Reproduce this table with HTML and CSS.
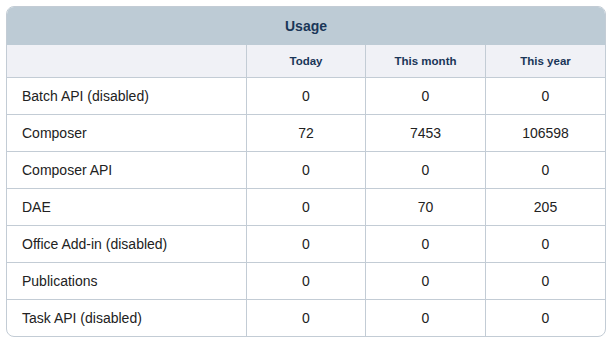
FILE: index.html
```html
<!DOCTYPE html>
<html lang="en">
<head>
<meta charset="utf-8">
<title>Usage</title>
<link rel="stylesheet" href="styles.css">
</head>
<body>
<div class="usage">
  <div class="title">Usage</div>
  <div class="grid">
    <div class="ch first"></div>
    <div class="ch">Today</div>
    <div class="ch">This month</div>
    <div class="ch">This year</div>

    <div class="c name">Batch API (disabled)</div><div class="c">0</div><div class="c">0</div><div class="c">0</div>
    <div class="c name">Composer</div><div class="c">72</div><div class="c">7453</div><div class="c">106598</div>
    <div class="c name">Composer API</div><div class="c">0</div><div class="c">0</div><div class="c">0</div>
    <div class="c name">DAE</div><div class="c">0</div><div class="c">70</div><div class="c">205</div>
    <div class="c name">Office Add-in (disabled)</div><div class="c">0</div><div class="c">0</div><div class="c">0</div>
    <div class="c name">Publications</div><div class="c">0</div><div class="c">0</div><div class="c">0</div>
    <div class="c name">Task API (disabled)</div><div class="c">0</div><div class="c">0</div><div class="c">0</div>
  </div>
</div>
</body>
</html>
```

FILE: styles.css
```css
html, body {
  margin: 0;
  background: #ffffff;
}
body {
  padding: 6px;
  font-family: "Liberation Sans", Arial, sans-serif;
  color: #222222;
}
.usage {
  width: 600px;
  box-sizing: border-box;
  border: 1px solid #c3ccd5;
  border-radius: 8px;
  overflow: hidden;
}
.title {
  height: 38px;
  line-height: 38px;
  background: #bdcbd5;
  color: #1a3658;
  font-weight: bold;
  font-size: 14px;
  text-align: center;
}
.grid {
  display: grid;
  grid-template-columns: 239px 119px 120px 120px;
}
.ch {
  height: 32px;
  line-height: 32px;
  background: #f0f1f6;
  color: #1a3658;
  font-weight: bold;
  font-size: 11.5px;
  text-align: center;
  border-left: 1px solid #c3ccd5;
  box-sizing: border-box;
}
.ch.first {
  border-left: none;
}
.c {
  height: 37px;
  line-height: 36px;
  box-sizing: border-box;
  border-top: 1px solid #c3ccd5;
  border-left: 1px solid #c3ccd5;
  font-size: 14px;
  text-align: center;
}
.c.name {
  border-left: none;
  text-align: left;
  padding-left: 15px;
}
```
